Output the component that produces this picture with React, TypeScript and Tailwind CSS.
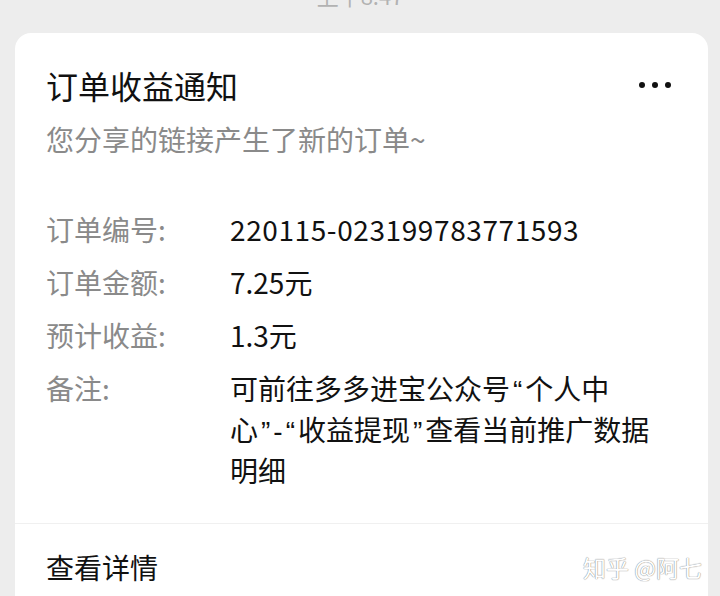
import React from "react";

// narrow latin quotes, like the phone's system font renders them
function Q({ c }: { c: string }) {
  return <span className="mx-[3px]" style={{ fontFamily: '"Liberation Sans", sans-serif' }}>{c}</span>;
}

const rows: { label: string; value: React.ReactNode }[] = [
  { label: "订单编号:", value: <span className="tracking-[0.6px]">220115-023199783771593</span> },
  { label: "订单金额:", value: "7.25元" },
  { label: "预计收益:", value: "1.3元" },
  {
    label: "备注:",
    value: (
      <>
        <span className="block whitespace-nowrap">
          可前往多多进宝公众号<Q c="“" />个人中
        </span>
        <span className="block whitespace-nowrap">
          心<Q c="”" />
          <span style={{ fontFamily: '"Liberation Sans", sans-serif' }}>-</span>
          <Q c="“" />收益提现<Q c="”" />查看当前推广数据
        </span>
        <span className="block whitespace-nowrap">明细</span>
      </>
    ),
  },
];

export default function App() {
  return (
    <div
      className="w-[720px] h-[596px] overflow-hidden bg-[#ededed] flex flex-col"
      style={{ fontFamily: '"Noto Sans CJK SC", "Noto Sans", sans-serif' }}
    >
      {/* time stamp, mostly scrolled off */}
      <div className="h-[33px] flex justify-center">
        <span className="-mt-[20px] text-[22px] leading-[30px] text-[#b2b2b2]">上午8:47</span>
      </div>

      <div className="ml-[15px] mr-[12px] flex-1 bg-white rounded-t-[16px]">
        <div className="pl-[31px] pr-[37px] pt-[32px] pb-[34px]">
          <div className="flex items-center justify-between">
            <h1 className="text-[32px] leading-[40px] text-[#111]">订单收益通知</h1>
            <div className="flex gap-[7px]">
              <span className="w-[6px] h-[6px] rounded-full bg-[#111]" />
              <span className="w-[6px] h-[6px] rounded-full bg-[#111]" />
              <span className="w-[6px] h-[6px] rounded-full bg-[#111]" />
            </div>
          </div>
          <p className="mt-[15px] text-[28px] leading-[38px] text-[#8a8a8a]">您分享的链接产生了新的订单~</p>

          <div className="mt-[52px] flex flex-col gap-[15px]">
            {rows.map((r) => (
              <div key={r.label} className="flex text-[28px] leading-[38px]">
                <div className="w-[184px] shrink-0 text-[#8a8a8a]">{r.label}</div>
                <div className="text-[#111]">{r.value}</div>
              </div>
            ))}
          </div>
        </div>

        <div className="h-px bg-[#f0f0f0]" />

        <div className="pl-[31px] pr-[6px] pt-[24px] flex items-center justify-between">
          <span className="text-[28px] leading-[38px] text-[#111]">查看详情</span>
          <span className="text-[23px] leading-[38px] text-white [text-shadow:0_0_1px_#8c8c8c,0_0_1px_#8c8c8c]">
            知乎 @阿七
          </span>
        </div>
      </div>
    </div>
  );
}
